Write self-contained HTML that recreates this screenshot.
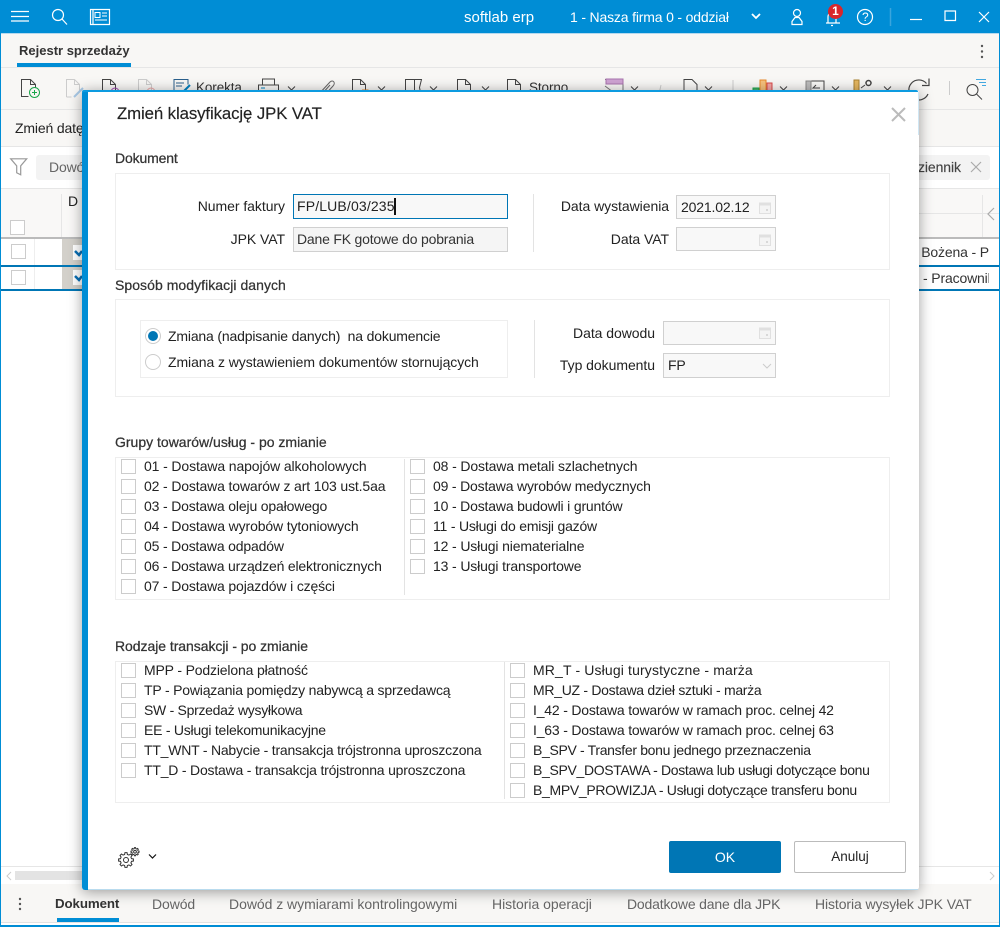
<!DOCTYPE html>
<html lang="pl"><head><meta charset="utf-8"><title>Zmień klasyfikację JPK VAT</title>
<style>
html,body{margin:0;padding:0;background:#fff}
body{width:1000px;height:927px;position:relative;overflow:hidden;font-family:"Liberation Sans",sans-serif;font-size:14px;color:#222}
div,span.a,svg{position:absolute}
.t{white-space:nowrap;line-height:18px;letter-spacing:-.15px}
.r{text-align:right;letter-spacing:-.05px}
.h{font-weight:400;color:#333;font-size:14px;line-height:16px;letter-spacing:-.15px;-webkit-text-stroke:.25px #333}
.box{border:1px solid #eee;box-sizing:border-box;background:#fff}
.cb{width:15px;height:15px;border:1px solid #ccc;box-sizing:border-box;background:#fff}
.inp{box-sizing:border-box;border:1px solid #d0d0d0;background:#f8f8f8}
.tab{white-space:nowrap;line-height:16px;color:#666;font-size:14px;top:896px;letter-spacing:-.1px}
svg{overflow:visible;fill:none}
</style></head><body>

<!-- title bar -->
<div style="left:0;top:0;width:1000px;height:33px;background:#008dd5"></div>
<div style="left:0;top:33px;width:1000px;height:1px;background:#b5d9ee"></div>
<div style="left:0;top:33px;width:1px;height:894px;background:#008dd5"></div>
<div style="left:999px;top:33px;width:1px;height:894px;background:#008dd5"></div>
<div style="left:0;top:925px;width:1000px;height:2px;background:#008dd5"></div>

<svg style="left:0;top:0" width="1000" height="33" stroke="#fff" stroke-width="1.2">
<path d="M11 11.500h18M11 16.500h18M11 21h18"/>
<circle cx="58" cy="15" r="5.500"/><path d="M62 19l5 5.500"/>
<path d="M90.500 9.500h19v15h-19zM93 9.500v15"/><path d="M95 12.500h5v5h-5zM102 13h5M102 16h5M95 20h12" stroke-width="1"/>
<path d="M752 14l4 4 4-4" stroke-width="1.800"/>
<circle cx="797" cy="13" r="3.500"/><path d="M792 24.500v-3l3-4h4l3 4v3z"/>
<path d="M826 23h14M828 23v-6c0-6 8-6 8 0v6M831 25.500h2"/>
<circle cx="865" cy="17" r="7.500"/>
<path d="M890.500 8v18" stroke="#3aa5dd" stroke-width="1.500"/>
<path d="M910 19.500h12"/>
<path d="M945 11h10.500v9.500h-10.500z"/>
<path d="M979 12l10 10M989 12l-10 10"/>
</svg>
<div class="t" style="left:862px;top:8px;color:#fff;font-size:12px">?</div>
<div class="t" style="left:464px;top:9px;color:#fff;font-size:15px;letter-spacing:0">softlab erp</div>
<div class="t" style="left:570px;top:8px;color:#fff;font-size:14px;letter-spacing:-.17px">1 - Nasza firma 0 - oddział</div>
<div style="left:828px;top:4px;width:15px;height:15px;border-radius:50%;background:#d8262c;color:#fff;font-size:12px;font-weight:700;text-align:center;line-height:15px">1</div>

<!-- tab strip -->
<div style="left:1px;top:34px;width:998px;height:33px;background:#f8f7f5"></div>
<div style="left:1px;top:67px;width:998px;height:1px;background:#e6e6e6"></div>
<div class="t" style="left:19px;top:42px;font-weight:700;font-size:13px;color:#333;letter-spacing:0">Rejestr sprzedaży</div>
<div style="left:17px;top:63px;width:114px;height:4px;background:#008dd5"></div>
<svg style="left:980px;top:44px" width="6" height="16"><circle cx="2" cy="2" r="1.200" fill="#555"/><circle cx="2" cy="7.500" r="1.200" fill="#555"/><circle cx="2" cy="13" r="1.200" fill="#555"/></svg>

<!-- toolbar -->
<div style="left:1px;top:68px;width:998px;height:41px;background:#f8f7f5"></div>
<div style="left:1px;top:109px;width:998px;height:1px;background:#e6e6e6"></div>
<svg style="left:0;top:68px" width="1000" height="30" stroke="#444" stroke-width="1">
<path d="M21.500 22.500V11.500h9l5 5v3M30.500 11.500v5h5M21.500 22.500v6h7"/>
<circle cx="34.500" cy="24.500" r="5" stroke="#1aa64b"/><path d="M32 24.500h5M34.500 22v5" stroke="#1aa64b"/>
<g stroke="#ccc"><path d="M66.500 29V11.500h8l5 5v6M74.500 11.500v5h5M66.500 29h5"/><path d="M74 29l9-9" stroke="#a9c9e6" stroke-width="2"/></g>
<path d="M102.500 24V11.500h8l5 5v8M110.500 11.500v5h5"/><circle cx="115" cy="24" r="4" stroke="#a04ab0"/>
<g stroke="#ccc"><path d="M138.500 24V11.500h8l5 5v8M146.500 11.500v5h5"/></g><circle cx="151" cy="24" r="4" stroke="#eba5a5"/>
<path d="M174 24V11.500h14v5M176 15h8M176 18h6" stroke="#2a5f8c"/><path d="M183 24l7-7" stroke="#0080c0" stroke-width="2"/>
<path d="M262.500 17v-6h12v6M258.500 24v-7h20v7"/><path d="M261 20h4" stroke="#0080c0"/><path d="M288 18.500l3.500 3.500 3.500-3.500"/>
<path d="M318 27l12-13c3-3 6 1 3 4l-10 11c-2 2-4 0-2-2l9-10" stroke="#666" stroke-width="1"/>
<path d="M352.500 24V11.500h8l5 5v8M360.500 11.500v5h5"/><path d="M362 22h6v3h-6" stroke="#e98a2c"/><path d="M378 18.500l3.500 3.500 3.500-3.500"/>
<path d="M405.500 24V11.500h9v13M414.500 11.500h7l-2 8 1 5"/><path d="M430 18.500l3.500 3.500 3.500-3.500"/>
<path d="M457.500 24V11.500h8l5 5v8M465.500 11.500v5h5"/><path d="M482 18.500l3.500 3.500 3.500-3.500"/>
<path d="M507.500 24V11.500h8l5 5v8M515.500 11.500v5h5"/>
<path d="M605 11.500h18v14M605 18l12 9" stroke="#777"/><path d="M606 11h17v5h-17z" fill="#cfa3d3" stroke="#a873ad"/><path d="M631 18.500l3.500 3.500 3.500-3.500"/>
<path d="M661 17l-2 9" stroke="#ccc"/>
<path d="M684 24V11.500h8l5 5v8M680 24h12"/><path d="M705 18.500l3.500 3.500 3.500-3.500"/>
<path d="M733 12v14" stroke="#ccc"/>
<path d="M753 20h6v6h-6z" fill="#45b36b" stroke="#1aa64b"/><path d="M760 12h6v14h-6z" fill="#f5c07c" stroke="#e98a2c"/><path d="M767 15h5v11h-5z" fill="#f2a4a4" stroke="#d84848"/><path d="M780 18.500l3.500 3.500 3.500-3.500"/>
<path d="M806 13h18v14h-18z" stroke="#444"/><path d="M806 13h5v14h-5z" fill="#bbb" stroke="#888"/><path d="M820 20h-7l3-3" stroke="#444"/><path d="M832 18.500l3.500 3.500 3.500-3.500"/>
<path d="M854 12h5v14h-5z" fill="#e4b660" stroke="#a98030"/><path d="M861 20l4-3"/><circle cx="868.500" cy="15" r="2.500" stroke="#444" stroke-width="1.500"/><path d="M884 18.500l3.500 3.500 3.500-3.500"/>
<path d="M926.500 15.500A10 10 0 1 0 928 26" stroke="#444" stroke-width="1.200"/><path d="M929 10.500v7h-7" stroke="#444" stroke-width="1.200"/>
<path d="M949.500 13v14" stroke="#ccc"/>
<circle cx="972.500" cy="22" r="5.500"/><path d="M976.500 26l5.500 5.500"/>
<path d="M976 11.500h10M979 14.500h7M982 17.500h4" stroke="#42a8e0"/>
</svg>
<div class="t" style="left:196px;top:79px;color:#333;letter-spacing:-.1px;font-size:13.500px">Korekta</div>
<div class="t" style="left:529px;top:79px;color:#333;letter-spacing:-.1px;font-size:13.500px">Storno</div>

<!-- action bar -->
<div style="left:1px;top:110px;width:998px;height:36px;background:#f8f7f5"></div>
<div style="left:1px;top:146px;width:998px;height:1px;background:#e6e6e6"></div>
<div class="t" style="left:15px;top:119px">Zmień datę</div>

<!-- filter bar -->
<svg style="left:10px;top:158px" width="18" height="18" stroke="#999" stroke-width="1.200"><path d="M.7.800h16l-6 7v9l-4-2v-7z"/></svg>
<div style="left:36px;top:155px;width:954px;height:25px;background:#f3f3f3;border-radius:3px"></div>
<div class="t" style="left:49px;top:158px;color:#666">Dowód</div>
<div class="t" style="left:908px;top:158px;color:#444;font-size:14px;letter-spacing:-.1px;-webkit-text-stroke:.15px #444">Dziennik</div>
<svg style="left:971px;top:162px" width="10" height="10" stroke="#aaa" stroke-width="1.200"><path d="M0 0l10 10M10 0l-10 10"/></svg>
<div style="left:1px;top:188px;width:998px;height:1px;background:#e6e6e6"></div>

<!-- grid header -->
<div style="left:1px;top:189px;width:998px;height:49px;background:#f9f8f7"></div>
<div style="left:61px;top:194px;width:1px;height:44px;background:#e6e6e6"></div>
<div style="left:916px;top:213px;width:83px;height:1px;background:#e6e6e6"></div>
<div style="left:982px;top:195px;width:1px;height:43px;background:#e6e6e6"></div>
<svg style="left:987px;top:207px" width="8" height="14" stroke="#aaa" stroke-width="1.200"><path d="M7 1L1 7l6 6"/></svg>
<div class="t" style="left:68px;top:192px">D</div>
<div class="cb" style="left:10px;top:220px"></div>
<div style="left:1px;top:237px;width:998px;height:2px;background:#bbb"></div>

<!-- rows -->
<div class="cb" style="left:11px;top:244px"></div>
<div style="left:34px;top:239px;width:1px;height:26px;background:#eee"></div>
<div style="left:62px;top:239px;width:20px;height:26px;background:#d3d0ca"></div>
<div style="left:73px;top:245px;width:9px;height:15px;background:#fff"></div>
<svg style="left:74px;top:248px" width="8" height="10" stroke="#0a6fb5" stroke-width="2.500"><path d="M1 3l4 4 3-4"/></svg>
<div style="left:1px;top:265px;width:998px;height:2px;background:#0076b5"></div>
<div class="cb" style="left:11px;top:270px"></div>
<div style="left:34px;top:267px;width:1px;height:22px;background:#eee"></div>
<div style="left:62px;top:267px;width:20px;height:22px;background:#d3d0ca"></div>
<div style="left:73px;top:270px;width:9px;height:15px;background:#fff"></div>
<svg style="left:74px;top:273px" width="8" height="10" stroke="#0a6fb5" stroke-width="2.500"><path d="M1 3l4 4 3-4"/></svg>
<div style="left:1px;top:289px;width:998px;height:2px;background:#0076b5"></div>
<div class="t" style="left:902px;top:243px;width:87px;overflow:hidden;text-align:right;color:#333">a Bożena - P</div>
<div class="t" style="left:923px;top:269px;width:66px;overflow:hidden;color:#333">- Pracownik</div>

<!-- bottom scroll -->
<div style="left:1px;top:866px;width:998px;height:1px;background:#e6e6e6"></div>
<div style="left:15px;top:871px;width:70px;height:9px;background:#e3e3e3"></div>
<svg style="left:6px;top:871px" width="6" height="10" stroke="#ccc"><path d="M5 1L1 5l4 4"/></svg>
<svg style="left:989px;top:871px" width="6" height="10" stroke="#ccc"><path d="M1 1l4 4-4 4"/></svg>
<div style="left:1px;top:884px;width:998px;height:38px;background:#f8f7f5"></div>
<div style="left:1px;top:922px;width:998px;height:1px;background:#e2e2e2"></div>
<svg style="left:18px;top:897px" width="4" height="14"><circle cx="2" cy="2" r="1.200" fill="#555"/><circle cx="2" cy="7" r="1.200" fill="#555"/><circle cx="2" cy="12" r="1.200" fill="#555"/></svg>
<div class="tab" style="left:55px;font-weight:700;color:#333;font-size:13.300px">Dokument</div>
<div style="left:57px;top:918px;width:62px;height:4px;background:#008dd5"></div>
<div class="tab" style="left:152px">Dowód</div>
<div class="tab" style="left:229px;letter-spacing:-.04px">Dowód z wymiarami kontrolingowymi</div>
<div class="tab" style="left:492px;letter-spacing:-.03px">Historia operacji</div>
<div class="tab" style="left:627px;letter-spacing:-.18px">Dodatkowe dane dla JPK</div>
<div class="tab" style="left:815px">Historia wysyłek JPK VAT</div>

<!-- dialog -->
<div style="left:82px;top:90px;width:837px;height:800px;background:#fff;border-radius:3px;box-shadow:0 2px 14px rgba(0,0,0,.38)"></div>
<div style="left:82px;top:90px;width:6px;height:800px;background:#008dd5;border-radius:3px 0 0 3px"></div>
<div style="left:82px;top:90px;width:836px;height:2px;background:#0d9be0;border-radius:3px 3px 0 0"></div>
<div style="left:917.500px;top:92px;width:1px;height:43px;background:#cfe6f4"></div>
<div style="left:88px;top:889px;width:830px;height:1px;background:#b9dbee"></div>

<div class="t" style="left:117px;top:103px;font-size:16.800px;line-height:21px;color:#222;letter-spacing:-.1px;-webkit-text-stroke:.15px #222">Zmień klasyfikację JPK VAT</div>
<svg style="left:891px;top:107px" width="15" height="15" stroke="#bbb" stroke-width="2"><path d="M1 1l13 13M14 1L1 14"/></svg>

<div class="t h" style="left:115px;top:150px">Dokument</div>
<div class="box" style="left:115px;top:173px;width:775px;height:97px"></div>
<div class="t r" style="left:150px;top:197px;width:135px">Numer faktury</div>
<div class="t r" style="left:150px;top:230px;width:135px">JPK VAT</div>
<div class="inp" style="left:293px;top:194px;width:215px;height:25px;border:1px solid #0076b5;background:#f8f8f8"></div>
<div class="t" style="left:297px;top:197px;letter-spacing:.15px">FP/LUB/03/235</div>
<div style="left:394px;top:198px;width:2px;height:17px;background:#111"></div>
<div class="inp" style="left:293px;top:227px;width:215px;height:25px;background:#f5f5f5"></div>
<div class="t" style="left:297px;top:230px;color:#333;letter-spacing:-.2px">Dane FK gotowe do pobrania</div>
<div style="left:533px;top:194px;width:1px;height:58px;background:#e3e3e3"></div>
<div class="t r" style="left:530px;top:197px;width:139px">Data wystawienia</div>
<div class="t r" style="left:530px;top:230px;width:139px">Data VAT</div>
<div class="inp" style="left:676px;top:195px;width:100px;height:24px"></div>
<div class="t" style="left:681px;top:198px">2021.02.12</div>
<div class="inp" style="left:676px;top:227px;width:100px;height:24px"></div>
<svg style="left:759px;top:201px" width="12" height="13"><path d="M.5 2h11v10.500h-11z" fill="#f4f4f4" stroke="#e0e0e0"/><path d="M0 3.500h12" stroke="#e0e0e0" stroke-width="2"/><path d="M7 9h2" stroke="#d8d8d8" stroke-width="2"/></svg>
<svg style="left:759px;top:233px" width="12" height="13"><path d="M.5 2h11v10.500h-11z" fill="#f4f4f4" stroke="#e0e0e0"/><path d="M0 3.500h12" stroke="#e0e0e0" stroke-width="2"/><path d="M7 9h2" stroke="#d8d8d8" stroke-width="2"/></svg>

<div class="t h" style="left:115px;top:277px;letter-spacing:.05px">Sposób modyfikacji danych</div>
<div class="box" style="left:115px;top:299px;width:775px;height:98px"></div>
<div class="box" style="left:140px;top:320px;width:368px;height:58px"></div>
<svg style="left:145px;top:328px" width="16" height="42"><circle cx="8" cy="8" r="7.500" fill="#fff" stroke="#ccc"/><circle cx="8" cy="8" r="5" fill="#0076b5"/><circle cx="8" cy="34" r="7.500" fill="#fff" stroke="#ccc"/></svg>
<div class="t" style="left:168px;top:327px;white-space:pre;letter-spacing:-.17px">Zmiana (nadpisanie danych)  na dokumencie</div>
<div class="t" style="left:168px;top:353px;letter-spacing:-.08px">Zmiana z wystawieniem dokumentów stornujących</div>
<div style="left:534px;top:320px;width:1px;height:58px;background:#e3e3e3"></div>
<div class="t r" style="left:530px;top:324px;width:125px">Data dowodu</div>
<div class="t r" style="left:530px;top:356px;width:125px">Typ dokumentu</div>
<div class="inp" style="left:663px;top:321px;width:113px;height:24px"></div>
<svg style="left:759px;top:326px" width="12" height="13"><path d="M.5 2h11v10.500h-11z" fill="#f4f4f4" stroke="#e0e0e0"/><path d="M0 3.500h12" stroke="#e0e0e0" stroke-width="2"/><path d="M7 9h2" stroke="#d8d8d8" stroke-width="2"/></svg>
<div class="inp" style="left:663px;top:353px;width:113px;height:25px"></div>
<div class="t" style="left:668px;top:356px">FP</div>
<svg style="left:762px;top:363px" width="10" height="6" stroke="#ccc"><path d="M1 1l4 4 4-4"/></svg>

<div class="t h" style="left:115px;top:434px;letter-spacing:0">Grupy towarów/usług - po zmianie</div>
<div class="box" style="left:115px;top:457px;width:775px;height:143px"></div>
<div style="left:404px;top:459px;width:1px;height:136px;background:#e3e3e3"></div>

<div class="cb" style="left:121px;top:459px"></div><div class="t" style="left:144px;top:457px;letter-spacing:-.12px">01 - Dostawa napojów alkoholowych</div>
<div class="cb" style="left:121px;top:479px"></div><div class="t" style="left:144px;top:477px;letter-spacing:-.14px">02 - Dostawa towarów z art 103 ust.5aa</div>
<div class="cb" style="left:121px;top:499px"></div><div class="t" style="left:144px;top:497px;letter-spacing:-.16px">03 - Dostawa oleju opałowego</div>
<div class="cb" style="left:121px;top:519px"></div><div class="t" style="left:144px;top:517px;letter-spacing:-.13px">04 - Dostawa wyrobów tytoniowych</div>
<div class="cb" style="left:121px;top:539px"></div><div class="t" style="left:144px;top:537px;letter-spacing:-.17px">05 - Dostawa odpadów</div>
<div class="cb" style="left:121px;top:559px"></div><div class="t" style="left:144px;top:557px;letter-spacing:-.18px">06 - Dostawa urządzeń elektronicznych</div>
<div class="cb" style="left:121px;top:579px"></div><div class="t" style="left:144px;top:577px;letter-spacing:-.15px">07 - Dostawa pojazdów i części</div>

<div class="cb" style="left:410px;top:459px"></div><div class="t" style="left:433px;top:457px;letter-spacing:-.13px">08 - Dostawa metali szlachetnych</div>
<div class="cb" style="left:410px;top:479px"></div><div class="t" style="left:433px;top:477px;letter-spacing:-.18px">09 - Dostawa wyrobów medycznych</div>
<div class="cb" style="left:410px;top:499px"></div><div class="t" style="left:433px;top:497px;letter-spacing:-.17px">10 - Dostawa budowli i gruntów</div>
<div class="cb" style="left:410px;top:519px"></div><div class="t" style="left:433px;top:517px;letter-spacing:-.2px">11 - Usługi do emisji gazów</div>
<div class="cb" style="left:410px;top:539px"></div><div class="t" style="left:433px;top:537px;letter-spacing:-.14px">12 - Usługi niematerialne</div>
<div class="cb" style="left:410px;top:559px"></div><div class="t" style="left:433px;top:557px;letter-spacing:-.14px">13 - Usługi transportowe</div>

<div class="t h" style="left:115px;top:638px;letter-spacing:-.05px">Rodzaje transakcji - po zmianie</div>
<div class="box" style="left:115px;top:661px;width:775px;height:142px"></div>
<div style="left:504px;top:662px;width:1px;height:137px;background:#e3e3e3"></div>

<div class="cb" style="left:121px;top:663px"></div><div class="t" style="left:144px;top:661px;letter-spacing:-.16px">MPP - Podzielona płatność</div>
<div class="cb" style="left:121px;top:683px"></div><div class="t" style="left:144px;top:681px;letter-spacing:-.19px">TP - Powiązania pomiędzy nabywcą a sprzedawcą</div>
<div class="cb" style="left:121px;top:703px"></div><div class="t" style="left:144px;top:701px;letter-spacing:-.29px">SW - Sprzedaż wysyłkowa</div>
<div class="cb" style="left:121px;top:723px"></div><div class="t" style="left:144px;top:721px;letter-spacing:-.25px">EE - Usługi telekomunikacyjne</div>
<div class="cb" style="left:121px;top:743px"></div><div class="t" style="left:144px;top:741px;letter-spacing:-.22px">TT_WNT - Nabycie - transakcja trójstronna uproszczona</div>
<div class="cb" style="left:121px;top:763px"></div><div class="t" style="left:144px;top:761px;letter-spacing:-.2px">TT_D - Dostawa - transakcja trójstronna uproszczona</div>

<div class="cb" style="left:510px;top:663px"></div><div class="t" style="left:533px;top:661px;letter-spacing:.14px">MR_T - Usługi turystyczne - marża</div>
<div class="cb" style="left:510px;top:683px"></div><div class="t" style="left:533px;top:681px;letter-spacing:-.29px">MR_UZ - Dostawa dzieł sztuki - marża</div>
<div class="cb" style="left:510px;top:703px"></div><div class="t" style="left:533px;top:701px;letter-spacing:-.19px">I_42 - Dostawa towarów w ramach proc. celnej 42</div>
<div class="cb" style="left:510px;top:723px"></div><div class="t" style="left:533px;top:721px;letter-spacing:-.19px">I_63 - Dostawa towarów w ramach proc. celnej 63</div>
<div class="cb" style="left:510px;top:743px"></div><div class="t" style="left:533px;top:741px;letter-spacing:-.33px">B_SPV - Transfer bonu jednego przeznaczenia</div>
<div class="cb" style="left:510px;top:763px"></div><div class="t" style="left:533px;top:761px;letter-spacing:-.33px">B_SPV_DOSTAWA - Dostawa lub usługi dotyczące bonu</div>
<div class="cb" style="left:510px;top:783px"></div><div class="t" style="left:533px;top:781px;letter-spacing:-.32px">B_MPV_PROWIZJA - Usługi dotyczące transferu bonu</div>

<!-- footer -->
<svg style="left:118px;top:846px" width="44" height="24" stroke="#333" stroke-width="1">
<g transform="translate(8 14)"><path d="M5.530-1.380L7.430-1.040 7.430 1.040 5.530 1.380 4.890 2.940 5.990 4.510 4.510 5.990 2.940 4.890 1.380 5.530 1.040 7.430-1.040 7.430-1.380 5.530-2.940 4.890-4.510 5.990-5.990 4.510-4.890 2.940-5.530 1.380-7.430 1.040-7.430-1.040-5.530-1.380-4.890-2.940-5.990-4.510-4.510-5.990-2.940-4.890-1.380-5.530-1.040-7.430 1.040-7.430 1.380-5.530 2.940-4.890 4.510-5.990 5.990-4.510 4.890-2.940z"/><circle r="2.500"/></g>
<g transform="translate(17 5.700) scale(.55)" stroke-width="1.800"><path d="M5.530-1.380L7.430-1.040 7.430 1.040 5.530 1.380 4.890 2.940 5.990 4.510 4.510 5.990 2.940 4.890 1.380 5.530 1.040 7.430-1.040 7.430-1.380 5.530-2.940 4.890-4.510 5.990-5.990 4.510-4.890 2.940-5.530 1.380-7.430 1.040-7.430-1.040-5.530-1.380-4.890-2.940-5.990-4.510-4.510-5.990-2.940-4.890-1.380-5.530-1.040-7.430 1.040-7.430 1.380-5.530 2.940-4.890 4.510-5.990 5.990-4.510 4.890-2.940z"/><circle r="2.500"/></g>
<path d="M31 8.500l3.500 3.500 3.500-3.500" stroke="#111" stroke-width="1.200"/>
</svg>
<div style="left:669px;top:841px;width:112px;height:32px;background:#0076b5;border-radius:2px;color:#fff;text-align:center;line-height:32px;font-size:14px">OK</div>
<div style="left:794px;top:841px;width:112px;height:32px;box-sizing:border-box;border:1px solid #bbb;border-radius:2px;background:#fff;color:#222;text-align:center;line-height:30px;font-size:13.500px">Anuluj</div>
</body></html>
